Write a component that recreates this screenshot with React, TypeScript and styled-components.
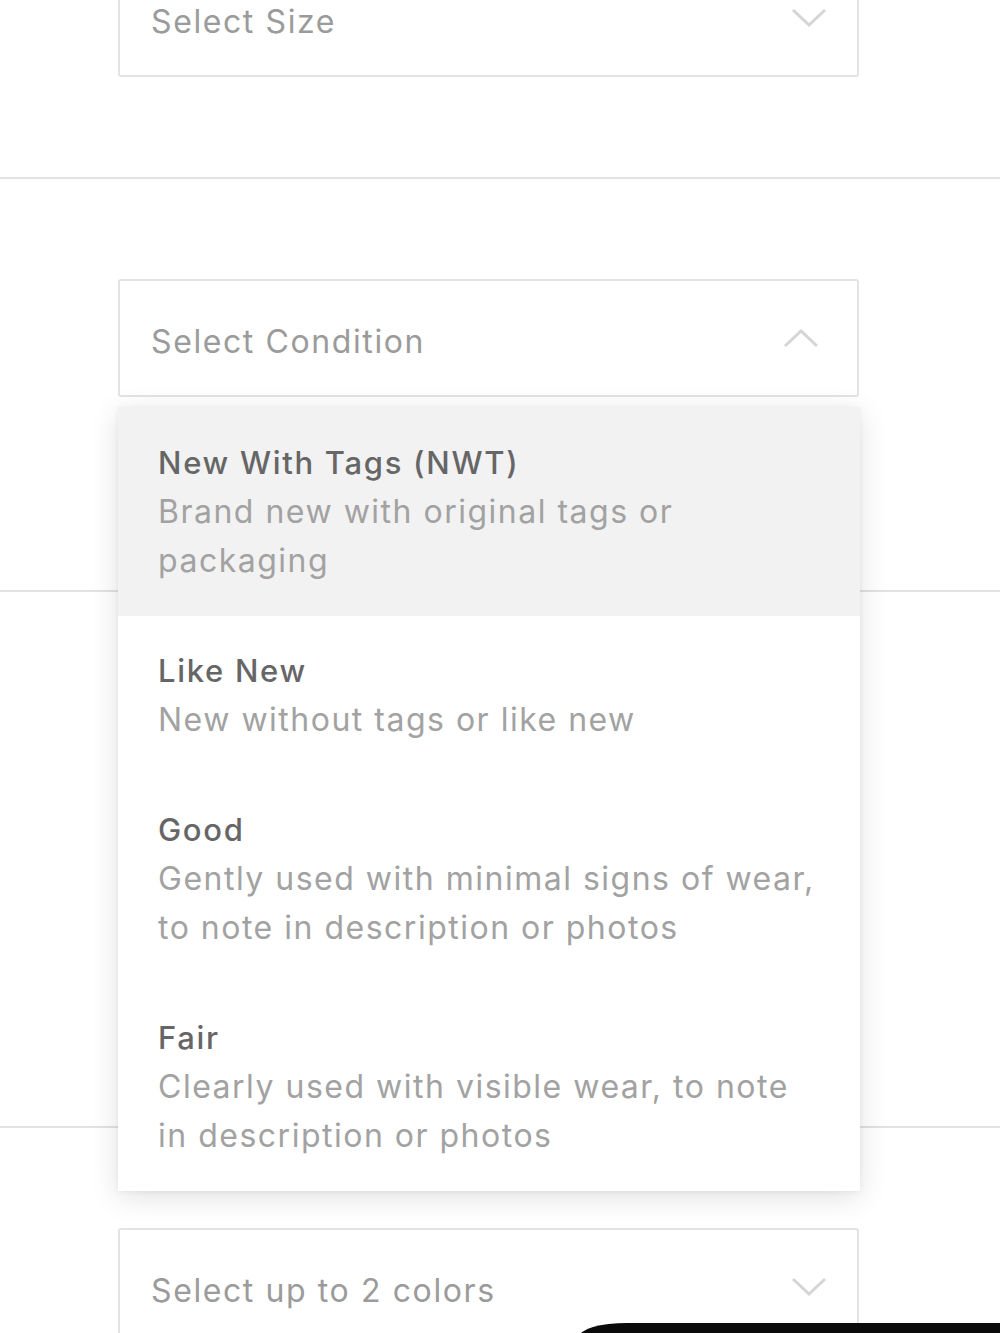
import React from "react";
import styled, { createGlobalStyle } from "styled-components";

const Global = createGlobalStyle`
  html, body { margin: 0; padding: 0; background: #ffffff; }
  body { font-family: Inter, Roboto, "Noto Sans", Arial, sans-serif; overflow: hidden; }
  * { box-sizing: border-box; }
`;

const Page = styled.div`
  position: relative;
  width: 1000px;
  height: 1333px;
  overflow: hidden;
  background: #fff;
`;

const Flow = styled.div`
  margin-top: -41px;
  display: flex;
  flex-direction: column;
`;

const Section = styled.section<{ $top: number; $bottom: number; $divider?: boolean }>`
  padding: ${(p) => p.$top}px 141px ${(p) => p.$bottom}px 118px;
  border-top: ${(p) => (p.$divider ? "2px solid #e2e2e2" : "none")};
`;

const Field = styled.div`
  position: relative;
  width: 741px;
`;

const SelectBox = styled.div`
  height: 118px;
  border: 2px solid #e3e3e3;
  border-radius: 3px;
  background: #fff;
  display: flex;
  align-items: center;
  justify-content: space-between;
  padding: 0 30px 0 31px;
`;

const Placeholder = styled.span`
  font-size: 32px;
  color: #9b9b9b;
  letter-spacing: 1.6px;
  margin-top: 6px;
`;

const Chevron = styled.svg<{ $shift?: number }>`
  width: 36px;
  height: 20px;
  margin-right: ${(p) => p.$shift ?? 0}px;
`;

const Menu = styled.ul`
  position: absolute;
  top: calc(100% + 10px);
  left: 0;
  width: 742px;
  margin: 0;
  padding: 0;
  list-style: none;
  background: #fff;
  box-shadow: 0 6px 28px rgba(0, 0, 0, 0.12), 0 1px 6px rgba(0, 0, 0, 0.05);
  z-index: 2;
`;

const Option = styled.li<{ $active?: boolean }>`
  padding: ${(p) => (p.$active ? "31px 40px 31px" : "30px 40px 31px")};
  background: ${(p) => (p.$active ? "#f2f2f2" : "#fff")};
  display: flex;
  flex-direction: column;
`;

const OptionTitle = styled.span`
  font-size: 31px;
  line-height: 49px;
  font-weight: 500;
  color: #666666;
  letter-spacing: 1.7px;
`;

const OptionDesc = styled.span`
  font-size: 32px;
  line-height: 49px;
  color: #a2a2a2;
  letter-spacing: 1.5px;
`;

const Bezel = styled.div`
  position: absolute;
  left: 579px;
  top: 1323px;
  width: 440px;
  height: 40px;
  background: #0a0a0a;
  border-top-left-radius: 48px 14px;
  z-index: 5;
`;

const Down = () => (
  <Chevron viewBox="0 0 36 20">
    <path d="M2 2 L18 17 L34 2" fill="none" stroke="#d5d5d5" strokeWidth="3" />
  </Chevron>
);

const Up = () => (
  <Chevron viewBox="0 0 36 20" $shift={8}>
    <path d="M2 18 L18 3 L34 18" fill="none" stroke="#d5d5d5" strokeWidth="3" />
  </Chevron>
);

const options = [
  { title: "New With Tags (NWT)", desc: ["Brand new with original tags or", "packaging"], active: true },
  { title: "Like New", desc: ["New without tags or like new"] },
  { title: "Good", desc: ["Gently used with minimal signs of wear,", "to note in description or photos"] },
  { title: "Fair", desc: ["Clearly used with visible wear, to note", "in description or photos"] },
];

export default function App() {
  return (
    <Page>
      <Global />
      <Flow>
        <Section $top={0} $bottom={100}>
          <Field>
            <SelectBox>
              <Placeholder>Select Size</Placeholder>
              <Down />
            </SelectBox>
          </Field>
        </Section>
        <Section $top={100} $bottom={193} $divider>
          <Field>
            <SelectBox>
              <Placeholder>Select Condition</Placeholder>
              <Up />
            </SelectBox>
            <Menu>
              {options.map((o) => (
                <Option key={o.title} $active={o.active}>
                  <OptionTitle>{o.title}</OptionTitle>
                  {o.desc.map((d) => (
                    <OptionDesc key={d}>{d}</OptionDesc>
                  ))}
                </Option>
              ))}
            </Menu>
          </Field>
        </Section>
        <Section $top={534} $bottom={0} $divider />
        <Section $top={100} $bottom={0} $divider>
          <Field>
            <SelectBox>
              <Placeholder>Select up to 2 colors</Placeholder>
              <Down />
            </SelectBox>
          </Field>
        </Section>
      </Flow>
      <Bezel />
    </Page>
  );
}
